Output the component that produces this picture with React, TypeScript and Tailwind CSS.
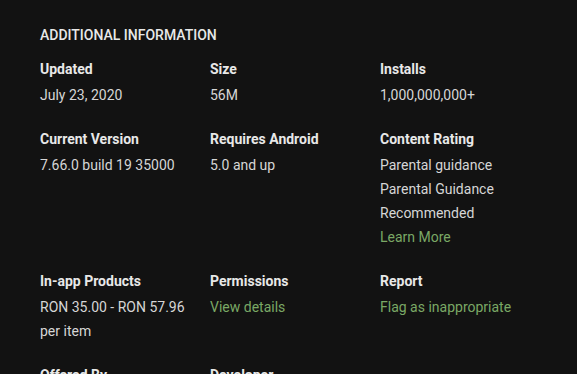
type Item = {
  label: string;
  lines: string[];
  link?: string;
};

const rows: Item[][] = [
  [
    { label: "Updated", lines: ["July 23, 2020"] },
    { label: "Size", lines: ["56M"] },
    { label: "Installs", lines: ["1,000,000,000+"] },
  ],
  [
    { label: "Current Version", lines: ["7.66.0 build 19 35000"] },
    { label: "Requires Android", lines: ["5.0 and up"] },
    {
      label: "Content Rating",
      lines: ["Parental guidance", "Parental Guidance", "Recommended"],
      link: "Learn More",
    },
  ],
  [
    { label: "In-app Products", lines: ["RON 35.00 - RON 57.96 per item"] },
    { label: "Permissions", lines: [], link: "View details" },
    { label: "Report", lines: [], link: "Flag as inappropriate" },
  ],
  [
    { label: "Offered By", lines: ["Facebook"] },
    { label: "Developer", lines: ["Visit website"] },
    { label: "", lines: [] },
  ],
];

export default function App() {
  return (
    <main
      className="h-[374px] overflow-hidden bg-[#121212] px-10 pt-[25px] text-sm"
      style={{ fontFamily: "Roboto, 'Liberation Sans', sans-serif" }}
    >
      <h2 className="text-sm font-medium leading-5 text-[#e8e8e8]">ADDITIONAL INFORMATION</h2>
      <div className="mt-[14px] flex flex-col gap-[22px]">
        {rows.map((row, i) => (
          <div key={i} className="grid grid-cols-[170px_170px_170px]">
            {row.map((it, j) => (
              <div key={j}>
                <p className="font-bold leading-5 text-[#e8e8e8]">{it.label}</p>
                <div className="mt-1 w-[150px] leading-6 text-[#d6d6d6]">
                  {it.lines.map((l) => (
                    <p key={l}>{l}</p>
                  ))}
                  {it.link ? <p className="text-[#7aa865]">{it.link}</p> : null}
                </div>
              </div>
            ))}
          </div>
        ))}
      </div>
    </main>
  );
}
